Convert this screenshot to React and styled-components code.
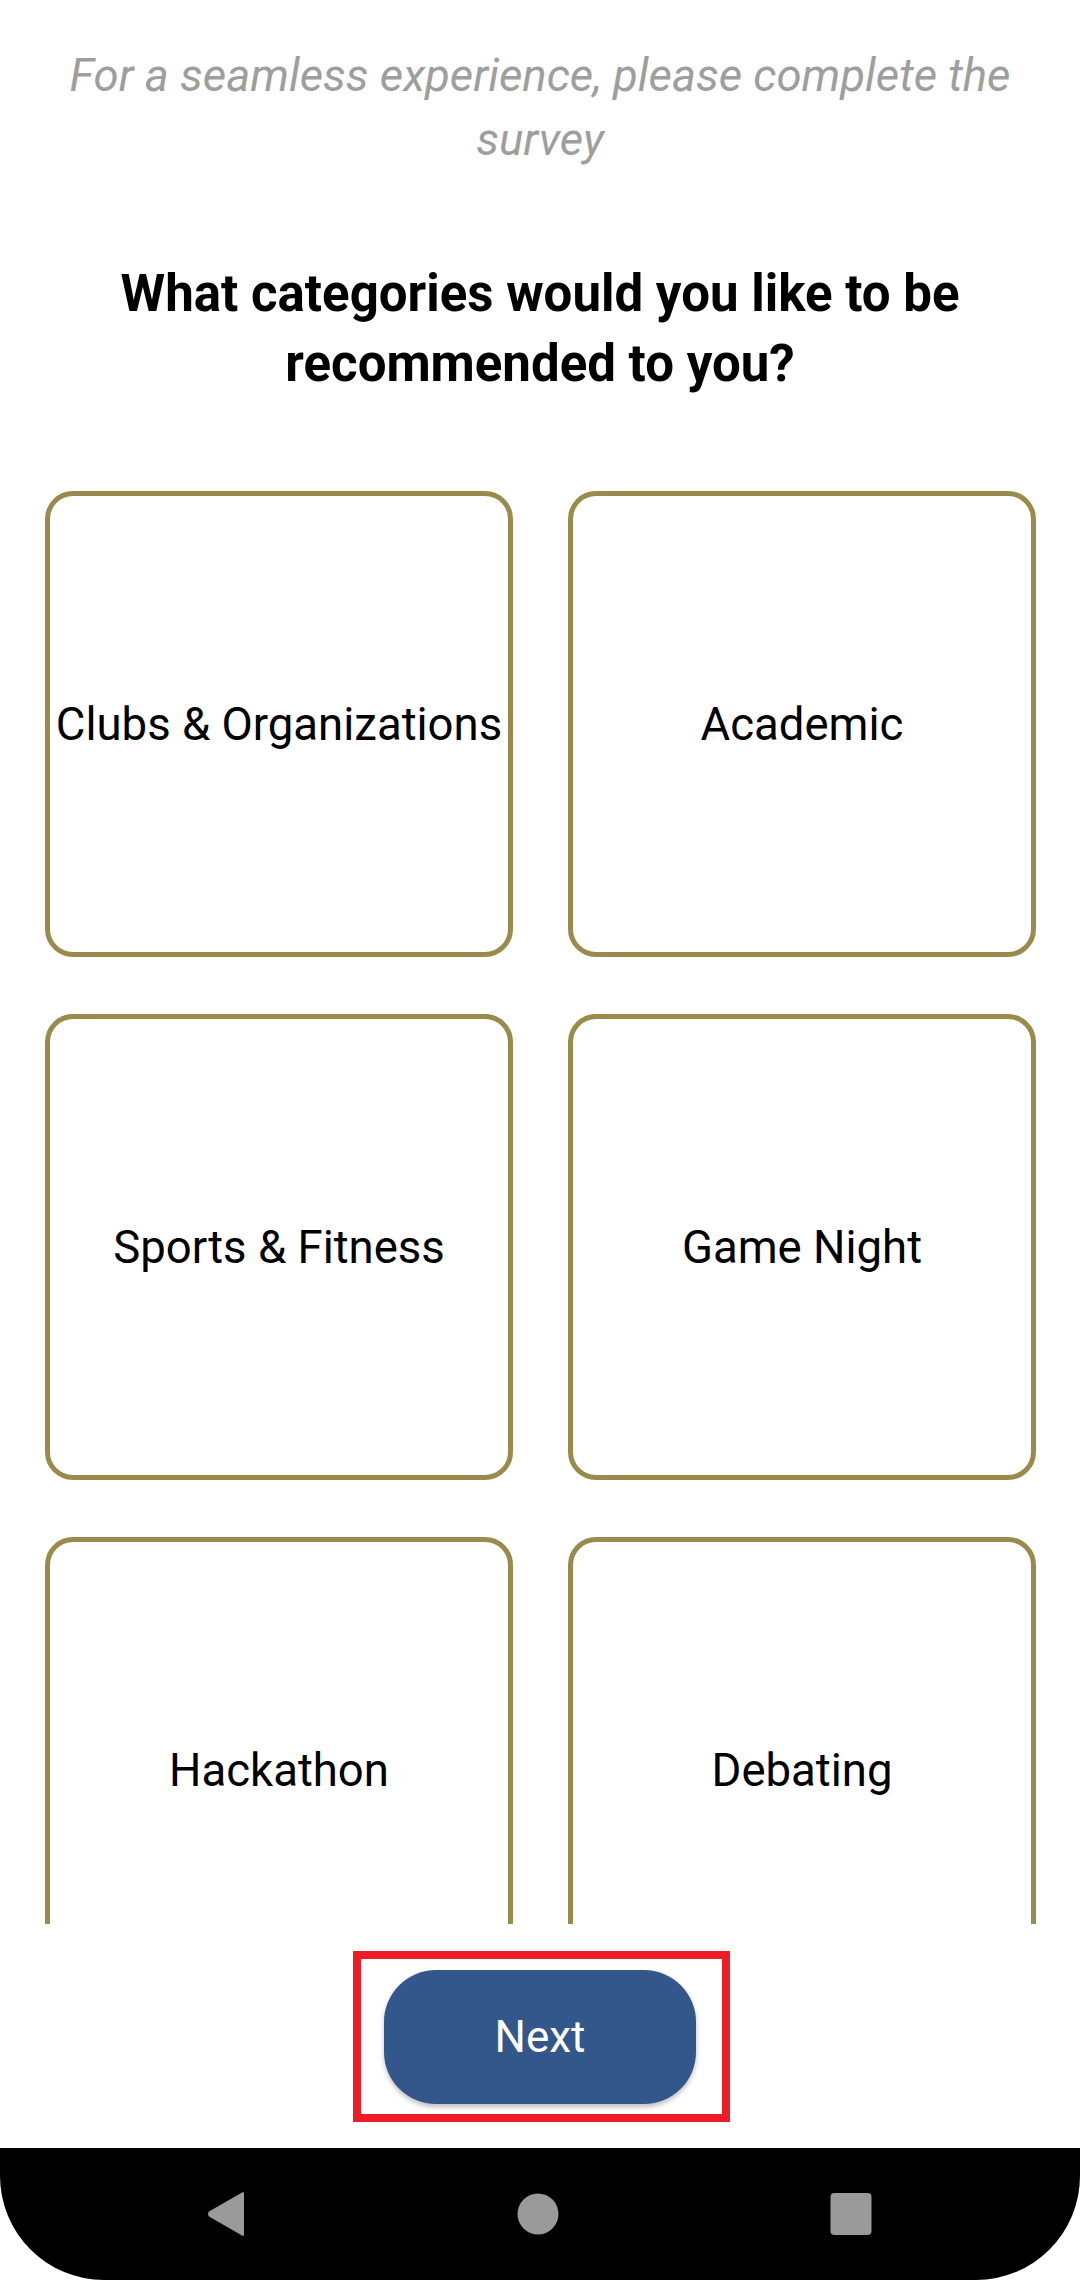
import React from "react";
import styled, { createGlobalStyle } from "styled-components";

const GlobalStyle = createGlobalStyle`
  html, body {
    margin: 0;
    padding: 0;
    background: #fff;
  }
  body {
    font-family: Roboto, "Liberation Sans", sans-serif;
  }
`;

const Screen = styled.div`
  width: 1080px;
  height: 2280px;
  display: flex;
  flex-direction: column;
  background: #fff;
  overflow: hidden;
`;

const ScrollArea = styled.div`
  height: 1924px;
  overflow: hidden;
  flex-shrink: 0;
`;

const Subtitle = styled.p`
  margin: 44px 0 0;
  padding: 0 60px;
  font-size: 45.5px;
  line-height: 64px;
  font-style: italic;
  color: #9e9e9e;
  text-align: center;
`;

const Question = styled.h1`
  margin: 87px 0 0;
  padding: 0 80px;
  font-size: 51px;
  line-height: 70px;
  font-weight: 700;
  color: #000;
  text-align: center;
`;

const Grid = styled.div`
  margin-top: 92px;
  padding-left: 45px;
  display: grid;
  grid-template-columns: repeat(2, 468px);
  column-gap: 55px;
  row-gap: 57px;
`;

const Card = styled.button`
  box-sizing: border-box;
  height: 466px;
  display: flex;
  align-items: center;
  justify-content: center;
  padding: 0;
  background: #fff;
  border: 5px solid #988b4b;
  border-radius: 28px;
  font-family: Roboto, "Liberation Sans", sans-serif;
  font-size: 45.5px;
  color: #000;
  white-space: nowrap;
`;

const Footer = styled.div`
  flex: 1;
  display: flex;
  align-items: center;
  justify-content: center;
`;

const Highlight = styled.div`
  border: 8px solid #ee1c25;
  padding: 11px 26px 10px 23px;
  margin-left: 3px;
`;

const NextButton = styled.button`
  width: 312px;
  height: 134px;
  border: none;
  border-radius: 52px;
  background: #33578a;
  color: #fff;
  font-family: Roboto, "Liberation Sans", sans-serif;
  font-size: 44px;
  box-shadow: 0 3px 5px rgba(0, 0, 0, 0.25);
`;

const NavBar = styled.div`
  height: 132px;
  background: #000;
  border-radius: 0 0 104px 104px;
  display: flex;
  align-items: center;
  justify-content: space-between;
  padding: 0 208px 0 207px;
`;

const NavIcon = styled.svg`
  width: ${({ w }) => w}px;
  height: 46px;
  fill: #9a9a9a;
`;

const categories = [
  "Clubs & Organizations",
  "Academic",
  "Sports & Fitness",
  "Game Night",
  "Hackathon",
  "Debating",
];

export default function App() {
  return (
    <>
      <GlobalStyle />
      <Screen>
        <ScrollArea>
          <Subtitle>For a seamless experience, please complete the survey</Subtitle>
          <Question>What categories would you like to be recommended to you?</Question>
          <Grid>
            {categories.map((c) => (
              <Card key={c}>{c}</Card>
            ))}
          </Grid>
        </ScrollArea>
        <Footer>
          <Highlight>
            <NextButton>Next</NextButton>
          </Highlight>
        </Footer>
        <NavBar>
          <NavIcon w={38} viewBox="0 0 38 46">
            <path d="M35 1.5 Q37 0 37 3 L37 43 Q37 46 35 44.5 L2 25.5 Q0 23 2 20.5 Z" />
          </NavIcon>
          <NavIcon w={42} viewBox="0 0 42 46">
            <circle cx="21" cy="23" r="20.5" />
          </NavIcon>
          <NavIcon w={42} viewBox="0 0 42 46">
            <rect x="0.5" y="2" width="41" height="42" rx="4" />
          </NavIcon>
        </NavBar>
      </Screen>
    </>
  );
}
